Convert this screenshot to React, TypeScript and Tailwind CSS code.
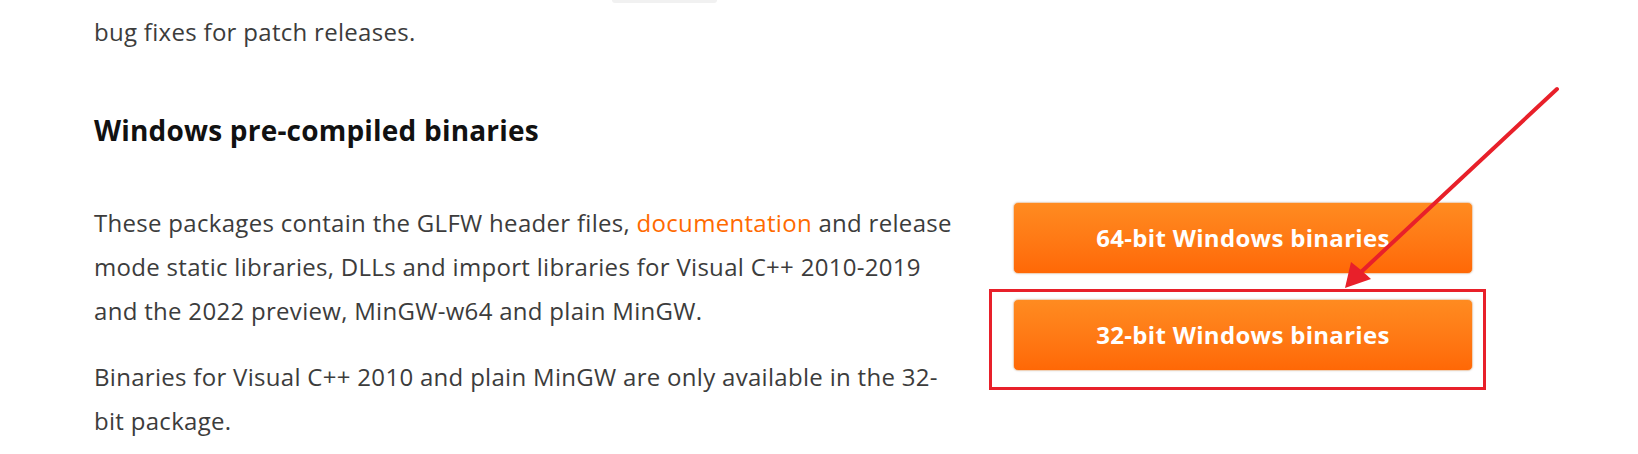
const body = "font-['Open_Sans','Segoe_UI','Liberation_Sans',sans-serif]";

const DownloadButton = ({ label }: { label: string }) => (
  <a className="flex items-center justify-center w-[460px] h-[72px] rounded-[5px] border border-[#f0d2b8] bg-linear-to-b from-[#ff8b20] to-[#ff6806] text-white text-[24px] tracking-[0.3px] font-bold shadow-[0_0_2px_rgba(0,0,0,0.15)]">
    {label}
  </a>
);

const App = () => {
  return (
    <div className={`relative w-[1638px] h-[454px] bg-white overflow-hidden ${body}`}>
      {/* remnant of inline code from previous line */}
      <div className="ml-[612px] w-[105px] h-[3px] rounded-b-[4px] bg-[#f1f1f1]" />

      <div className="pl-[94px]">
        <p className="mt-[7px] text-[24px] tracking-[0.3px] leading-[44px] text-[#3c3c3c]">bug fixes for patch releases.</p>

        <h3 className="mt-[58px] text-[28px] tracking-[0.2px] leading-[36px] font-bold text-[#111]">Windows pre-compiled binaries</h3>

        <div className="flex mt-[53px]">
          {/* text column */}
          <div className="w-[862px] shrink-0 text-[24px] tracking-[0.3px] leading-[44px] text-[#3c3c3c]">
            <p>
              These packages contain the GLFW header files, <a className="text-[#ff6a00]">documentation</a> and release
              mode static libraries, DLLs and import libraries for Visual C++ 2010-2019 and the 2022 preview, MinGW-w64
              and plain MinGW.
            </p>
            <p className="mt-[22px]">
              Binaries for Visual C++ 2010 and plain MinGW are only available in the 32-bit package.
            </p>
          </div>

          {/* downloads */}
          <div className="relative flex flex-col gap-[25px] ml-[57px] mt-[1px]">
            <DownloadButton label="64-bit Windows binaries" />
            <DownloadButton label="32-bit Windows binaries" />
            {/* annotation box */}
            <div className="absolute left-[-24px] top-[87px] w-[497px] h-[101px] border-[3px] border-[#e8202a]" />
          </div>
        </div>
      </div>

      {/* annotation arrow */}
      <svg className="absolute inset-0 pointer-events-none" width="1638" height="454">
        <line x1="1557" y1="89" x2="1360" y2="273" stroke="#e8202a" strokeWidth="4" strokeLinecap="round" />
        <polygon points="1345,288 1351,262 1361,270 1371,279" fill="#e8202a" />
      </svg>
    </div>
  );
};

export default App;
